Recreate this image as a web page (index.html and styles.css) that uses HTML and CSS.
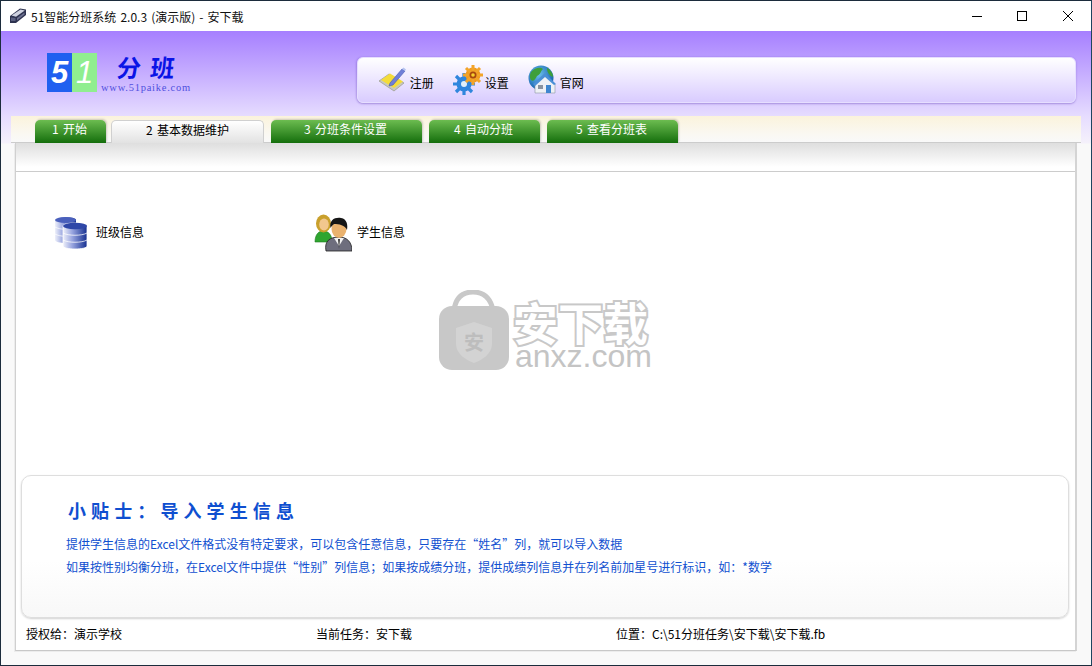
FILE: index.html
```html
<!DOCTYPE html>
<html lang="zh">
<head>
<meta charset="utf-8">
<title>51智能分班系统</title>
<link rel="stylesheet" href="styles.css">
</head>
<body>
<div class="window">
  <div class="titlebar">
    <svg class="app-icon" width="18" height="16" viewBox="0 0 18 16"><path d="M1 8 11 .5 17 1.500V7L7 15H1Z" fill="#2e3350"/><path d="M2.500 7.500 11.500 1.500 15.800 2.500 7 8.800Z" fill="#cfd2e0"/><path d="M2 9.500 6.500 10V13H2Z" fill="#5b6080"/><path d="M8 10 15.500 4.500V6.500L8 12.500Z" fill="#6d7190"/></svg>
    <span class="app-title">51智能分班系统 2.0.3 (演示版) - 安下载</span>
    <div class="win-buttons">
      <svg class="win-btn" width="46" height="30" viewBox="0 0 46 30"><path d="M18 15.500H28" stroke="#000" fill="none"/></svg>
      <svg class="win-btn" width="46" height="30" viewBox="0 0 46 30"><rect x="18.500" y="10.500" width="9" height="9" stroke="#000" fill="none"/></svg>
      <svg class="win-btn" width="46" height="30" viewBox="0 0 46 30"><path d="M18 10 28 20M28 10 18 20" stroke="#000" fill="none"/></svg>
    </div>
  </div>
  <div class="main">
    <header class="header">
      <div class="logo">
        <div class="logo-mark"><span class="digit blue">5</span><span class="digit green">1</span></div>
        <div class="logo-text">
          <div class="logo-cn">分&nbsp;班</div>
          <div class="logo-url">www.51paike.com</div>
        </div>
      </div>
      <div class="toolbar">
        <div class="tool">
          <svg width="30" height="28" viewBox="0 0 30 28"><path d="M1 15 11 8 26 17 16 25Z" fill="#c9c9bd" stroke="#8d8d80" stroke-width=".6"/><path d="M3 14 12 7.500 25 15.500 16 22Z" fill="#f4dc3a"/><path d="M12 17 24 3 27 5 15 19 11 20Z" fill="#6f7fd8" stroke="#4557b5" stroke-width=".6"/><path d="M24 3 25.500 1.500 28 3.500 27 5Z" fill="#b5c4ef"/></svg>
          <span>注册</span>
        </div>
        <div class="tool">
          <svg width="30" height="30" viewBox="0 0 30 30"><circle cx="11" cy="19" r="7.500" fill="#2f86dd"/><g stroke="#2f86dd" stroke-width="3.200"><path d="M11 8V30M0 19H22M3 11 19 27M19 11 3 27"/></g><circle cx="11" cy="19" r="3" fill="#dff0fb"/><circle cx="20" cy="10" r="7.500" fill="#f29a1c"/><g stroke="#f2a42a" stroke-width="3"><path d="M20 0V20M10 10H30M13 3 27 17M27 3 13 17"/></g><circle cx="20" cy="10" r="3.500" fill="#a8470f"/><circle cx="20" cy="10" r="1.800" fill="#f6d02e"/></svg>
          <span>设置</span>
        </div>
        <div class="tool tool-web">
          <svg width="28" height="30" viewBox="0 0 28 30"><defs><radialGradient id="globe" cx=".4" cy=".35" r=".7"><stop offset="0" stop-color="#6cc0ee"/><stop offset="1" stop-color="#0f5aa8"/></radialGradient></defs><circle cx="13" cy="13" r="12.500" fill="url(#globe)"/><path d="M4 6C8 2 13 2 15 4 12 7 13 9 9 11 7 15 5 17 3 15 1 12 2 8 4 6ZM19 3C23 5 25 9 25 12 22 11 19 8 19 3Z" fill="#3e9f3a"/><path d="M7 19 17 10 27 19V28H7Z" fill="#eef1f5" stroke="#8b95a3" stroke-width=".6"/><path d="M5 19 17 8 28 19 26 20 17 12 7 21Z" fill="#4a8fd6"/><rect x="18" y="20" width="5" height="8" fill="#3f86cf"/><rect x="10" y="20" width="5" height="4" fill="#8a93a0"/></svg>
          <span>官网</span>
        </div>
      </div>
    </header>
    <nav class="tabstrip">
      <div class="tab t1">1 开始</div>
      <div class="tab active t2">2 基本数据维护</div>
      <div class="tab t3">3 分班条件设置</div>
      <div class="tab t4">4 自动分班</div>
      <div class="tab t5">5 查看分班表</div>
    </nav>
    <section class="panel">
      <div class="panel-top"></div>
      <div class="panel-body">
        <div class="items">
          <div class="item item-class">
            <svg width="36" height="34" viewBox="0 0 36 34"><defs><linearGradient id="db" x1="0" x2="1"><stop offset="0" stop-color="#eef0fa"/><stop offset=".4" stop-color="#95a2de"/><stop offset="1" stop-color="#152f90"/></linearGradient></defs><path d="M1 4C1 0 22 0 22 4V24C22 28 1 28 1 24Z" fill="url(#db)"/><ellipse cx="11.500" cy="4" rx="10.500" ry="3" fill="#4a60bc"/><path d="M1 11C6 14 17 14 22 11M1 18C6 21 17 21 22 18" stroke="#fff" fill="none" stroke-opacity=".7"/><path d="M9 10C9 6 33 6 33 10V30C33 34 9 34 9 30Z" fill="url(#db)" stroke="#fff" stroke-width=".8"/><ellipse cx="21" cy="10" rx="12" ry="3.200" fill="#2f47a8"/><path d="M9 17C14 20 28 20 33 17M9 24C14 27 28 27 33 24" stroke="#fff" fill="none" stroke-opacity=".75"/></svg>
            <span>班级信息</span>
          </div>
          <div class="item item-student">
            <svg width="38" height="38" viewBox="0 0 38 38"><path d="M1 28C1 20 5 17 9 17 14 17 18 20 18 28Z" fill="#2fa530" stroke="#1d7a20" stroke-width=".6"/><ellipse cx="9.500" cy="9.500" rx="7.500" ry="9" fill="#c9a02c"/><ellipse cx="10" cy="10.500" rx="4.800" ry="6" fill="#f2c78e"/><path d="M12 37C10 27 16 23 25 23 33 23 38 28 38 37Z" fill="#6e6e7d" stroke="#222" stroke-width=".8"/><path d="M20 24 25 32 30 24Z" fill="#f2f2f2"/><path d="M24 25 25 35 26 25Z" fill="#333"/><ellipse cx="25" cy="15" rx="7.500" ry="9" fill="#eab26e"/><path d="M16.500 14C15 6 21 3 27 4 33 5 34 11 33 16 31 11 25 10 20 10 18.500 11 17 13 16.500 14Z" fill="#161616"/></svg>
            <span>学生信息</span>
          </div>
        </div>
        <div class="watermark">
          <svg width="72" height="82" viewBox="0 0 72 82"><path d="M16 20C18 6 26 2 35 2S52 6 55 20" fill="none" stroke="#c8c8c8" stroke-width="5"/><rect x="1" y="16" width="70" height="64" rx="13" fill="#c8c8c8"/><path d="M36 32 54 38V54C54 64 44 70 36 73 28 70 18 64 18 54V38Z" fill="#d3d3d3"/><text class="wm-shield" x="36" y="60" text-anchor="middle">安</text></svg>
          <div class="wm-text">
            <div class="wm-cn">安下载</div>
            <div class="wm-en">anxz.com</div>
          </div>
        </div>
        <div class="tip">
          <h2 class="tip-title">小贴士：导入学生信息</h2>
          <p>提供学生信息的Excel文件格式没有特定要求，可以包含任意信息，只要存在“姓名”列，就可以导入数据</p>
          <p>如果按性别均衡分班，在Excel文件中提供“性别”列信息；如果按成绩分班，提供成绩列信息并在列名前加星号进行标识，如：*数学</p>
        </div>
        <footer class="status">
          <span class="st-a">授权给：演示学校</span>
          <span class="st-b">当前任务：安下载</span>
          <span>位置：C:\51分班任务\安下载\安下载.fb</span>
        </footer>
      </div>
    </section>
  </div>
</div>
</body>
</html>
```

FILE: styles.css
```css
* { box-sizing: border-box; }
html, body { margin: 0; padding: 0; }
body {
  width: 1092px;
  height: 666px;
  overflow: hidden;
  font-family: "Noto Sans CJK SC", "Noto Sans", sans-serif;
  font-size: 12px;
  color: #000;
}
.window {
  width: 1092px;
  height: 666px;
  display: flex;
  flex-direction: column;
  border: 1px solid #1c2c3c;
  border-right-color: #1d4560;
  background: #f9f9f9;
}
.titlebar {
  height: 30px;
  flex: none;
  display: flex;
  align-items: center;
  background: #fff;
  padding-left: 8px;
}
.app-icon { margin-right: 4px; }
.app-title { font-size: 12px; color: #111; word-spacing: 1.400px; }
.win-buttons { margin-left: auto; display: flex; }
.win-btn { width: 46px; height: 30px; }
.win-btn:nth-child(1) { margin-right: -1px; }
.main {
  flex: 1;
  display: flex;
  flex-direction: column;
  background: linear-gradient(#a67fff 0, #e6dcff 85px, #f5f1fb 112px, #f9f9f9 113px);
}
.header {
  height: 85px;
  flex: none;
  display: flex;
  padding: 22px 15px 0 46px;
}
.logo { display: flex; width: 310px; align-items: flex-start; }
.logo-mark { display: flex; width: 50px; height: 39px; }
.digit {
  width: 25px;
  height: 39px;
  color: #fff;
  font: italic bold 31px/40px "Liberation Sans", sans-serif;
  text-align: center;
}
.blue { background: #2060f0; }
.green { background: #90ee90; font-weight: 400; }
.logo-text { margin-left: 4px; }
.logo-cn {
  padding-left: 16px;
  height: 30px;
  font-size: 24px;
  line-height: 28px;
  letter-spacing: 2px;
  font-weight: 700;
  color: #0a14e6;
  transform: skewX(-6deg);
  white-space: nowrap;
}
.logo-url {
  font: 10.500px/10px "Liberation Serif", serif;
  letter-spacing: .75px;
  color: #5050e0;
  white-space: nowrap;
}
.toolbar {
  width: 720px;
  height: 46px;
  margin-top: 4px;
  display: flex;
  align-items: center;
  padding-left: 20px;
  border-radius: 6px;
  border: 1px solid #e6deff;
  background: linear-gradient(#fff, #d9ccff);
  box-shadow: 0 1px 2px rgba(110, 80, 190, .45), -1px 0 2px rgba(110, 80, 190, .25);
}
.tool { display: flex; align-items: center; width: 75px; gap: 2px; white-space: nowrap; flex: none; }
.tool span { margin-top: 6px; line-height: 14px; }
.tool-web { gap: 4px; }
.tabstrip {
  height: 27px;
  flex: none;
  margin: 0 10px;
  display: flex;
  align-items: flex-end;
  gap: 7px;
  padding-left: 24px;
  background: linear-gradient(#fbf3dc, #faf8f2 70%, #f9f9f9);
  border-bottom: 1px solid #ccc;
}
.tab {
  height: 23px;
  margin-bottom: -1px;
  padding-right: 2px;
  border-radius: 5px 5px 0 0;
  color: #fff;
  text-align: center;
  line-height: 18px;
  word-spacing: 1.500px;
  background: linear-gradient(#6cbc50, #146e0c);
  box-shadow: 1px -1px 2px rgba(0, 0, 0, .18);
}
.t1 { width: 71px; margin-right: -2px; }
.t2 { width: 153px; }
.t3 { width: 151px; }
.t4 { width: 111px; }
.t5 { width: 131px; }
.active {
  padding-right: 0;
  color: #000;
  background: linear-gradient(#fff, #e2e2e2);
  border: 1px solid #d0d0d0;
  border-bottom: none;
  line-height: 17px;
  box-shadow: none;
}
.panel {
  margin: 0 14px 14px 14px;
  flex: 1;
  display: flex;
  flex-direction: column;
  background: #fff;
  border-left: 1px solid #d0d0d0;
  border-right: 2px solid #d4d4d4;
  border-bottom: 1px solid #c8c8c8;
  box-shadow: -1px 1px 0 #ececec;
}
.panel-top {
  height: 29px;
  flex: none;
  background: linear-gradient(#dedede, #fff 85%);
  border-bottom: 1px solid #ccc;
}
.panel-body {
  flex: 1;
  display: flex;
  flex-direction: column;
  position: relative;
  padding: 0 6px 0 5px;
}
.items {
  height: 303px;
  flex: none;
  display: flex;
  align-items: flex-start;
  padding: 42px 0 0 33px;
}
.item { display: flex; align-items: center; height: 38px; }
.item span { margin: 0 0 4px 5px; }
.item-class { width: 260px; }
.item-class span { margin-left: 6px; }
.watermark {
  position: absolute;
  left: 422px;
  top: 118px;
  display: flex;
  gap: 3px;
  pointer-events: none;
}
.wm-shield {
  font-size: 20px;
  font-weight: 700;
  fill: #bdbdbd;
}
.wm-text { padding-top: 11px; }
.wm-cn {
  font-size: 45px;
  line-height: 42px;
  font-weight: 700;
  color: #fff;
  -webkit-text-stroke: 4px #c8c8c8;
  paint-order: stroke fill;
  white-space: nowrap;
}
.wm-en {
  font: 32px/27px "Liberation Sans", sans-serif;
  color: #c4c4c4;
  white-space: nowrap;
  margin-left: 2px;
}
.tip {
  height: 143px;
  flex: none;
  padding: 22px 0 0 44px;
  border: 1px solid #dedede;
  border-radius: 10px;
  background: linear-gradient(#fff 60%, #f8f8f8);
  box-shadow: 0 1px 2px rgba(0, 0, 0, .18);
  color: #1050d0;
}
.tip-title {
  margin: 0 0 11px 2px;
  font-size: 18px;
  line-height: 24px;
  font-weight: 700;
  letter-spacing: 5.100px;
  color: #0f4fd0;
}
.tip p { margin: 0; height: 22.500px; line-height: 22px; white-space: nowrap; }
.status {
  display: flex;
  padding: 7px 0 0 5px;
  line-height: 18px;
}
.st-a { width: 290px; }
.st-b { width: 300px; }
```
